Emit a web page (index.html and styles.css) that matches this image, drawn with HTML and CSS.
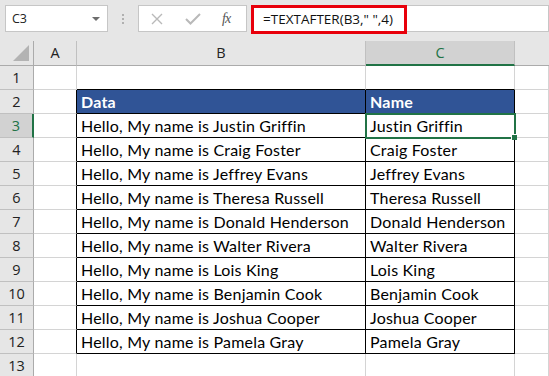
FILE: index.html
```html
<!DOCTYPE html>
<html lang="en">
<head>
  <meta charset="UTF-8" />
  <title>TEXTAFTER</title>
  <link rel="stylesheet" href="styles.css">
</head>
<body>
  <div class="formula-bar">
    <div class="name-box">
      <span>C3</span>
      <span class="drop"></span>
    </div>
    <div class="grip">
      <i></i><i></i><i></i>
    </div>
    <div class="fx-buttons">
      <svg class="btn-x" width="12" height="12" viewBox="0 0 12 12"><path d="M1 1 L11 11 M11 1 L1 11" stroke="#b9b9b9" stroke-width="1.4" fill="none"/></svg>
      <svg class="btn-ok" width="16" height="12" viewBox="0 0 16 12"><path d="M1 6 L5.5 10.5 L15 1" stroke="#b9b9b9" stroke-width="2" fill="none"/></svg>
      <span class="fx">fx</span>
    </div>
    <div class="formula-input">
      <span class="formula">=TEXTAFTER(B3," ",4)</span>
    </div>
  </div>

  <div class="sheet" id="sheet"></div>

  <script>
    const rows = [
      ['Hello, My name is Justin Griffin', 'Justin Griffin'],
      ['Hello, My name is Craig Foster', 'Craig Foster'],
      ['Hello, My name is Jeffrey Evans', 'Jeffrey Evans'],
      ['Hello, My name is Theresa Russell', 'Theresa Russell'],
      ['Hello, My name is Donald Henderson', 'Donald Henderson'],
      ['Hello, My name is Walter Rivera', 'Walter Rivera'],
      ['Hello, My name is Lois King', 'Lois King'],
      ['Hello, My name is Benjamin Cook', 'Benjamin Cook'],
      ['Hello, My name is Joshua Cooper', 'Joshua Cooper'],
      ['Hello, My name is Pamela Gray', 'Pamela Gray']
    ];
    const sheet = document.getElementById('sheet');

    function cell(cls, text) {
      const d = document.createElement('div');
      d.className = 'cell ' + cls;
      if (text) d.textContent = text;
      sheet.appendChild(d);
      return d;
    }

    // column headers
    cell('corner');
    cell('col-head', 'A');
    cell('col-head', 'B');
    cell('col-head sel', 'C');
    cell('col-head last', '');

    for (let r = 1; r <= 13; r++) {
      cell('row-head' + (r === 3 ? ' sel' : ''), String(r));
      const inTable = r >= 2 && r <= 12;
      cell(inTable ? 'a edge' : 'a');
      if (r === 1) {
        cell('b top');
        cell('c top');
      } else if (r === 2) {
        cell('b head', 'Data');
        cell('c head', 'Name');
      } else if (inTable) {
        cell('b data', rows[r - 3][0]);
        cell('c data' + (r === 3 ? ' active' : ''), rows[r - 3][1]);
      } else {
        cell('b');
        cell('c');
      }
      cell('d' + (inTable ? ' edge' : ''));
    }
  </script>
</body>
</html>
```

FILE: styles.css
```css
body {
  margin: 0;
  background-color: #e6e6e6;
  font-family: "Open Sans", sans-serif;
  overflow: hidden;
}
.formula-bar {
  display: flex;
  align-items: flex-start;
  height: 41px;
  padding: 5px 0 0 5px;
  box-sizing: border-box;
}
.name-box {
  width: 103px;
  height: 27px;
  box-sizing: border-box;
  background-color: #fff;
  border: 1px solid #c6c6c6;
  display: flex;
  align-items: center;
  justify-content: space-between;
  padding: 0 7px 0 6px;
  font-size: 12.5px;
  color: #222;
}
.drop {
  width: 0;
  height: 0;
  border-left: 4px solid transparent;
  border-right: 4px solid transparent;
  border-top: 4px solid #6d6d6d;
}
.grip {
  width: 30px;
  height: 27px;
  display: flex;
  flex-direction: column;
  align-items: center;
  justify-content: center;
  gap: 2px;
}
.grip i {
  width: 2px;
  height: 2px;
  background-color: #b0b0b0;
}
.fx-buttons {
  width: 109px;
  height: 27px;
  box-sizing: border-box;
  background-color: #fff;
  border: 1px solid #c6c6c6;
  display: flex;
  align-items: center;
  padding: 0 0 0 12px;
}
.btn-x {
  margin-right: 22px;
}
.btn-ok {
  margin-right: 21px;
}
.fx {
  font-family: "Liberation Serif", serif;
  font-style: italic;
  font-size: 14px;
  color: #555;
  letter-spacing: -1px;
}
.formula-input {
  margin-left: 4px;
  width: 298px;
  height: 27px;
  box-sizing: border-box;
  background-color: #fff;
  border: 1px solid #c6c6c6;
  position: relative;
}
.formula {
  position: absolute;
  left: -1px;
  top: -1px;
  width: 156px;
  height: 29px;
  box-sizing: border-box;
  border: 3px solid #e8000b;
  font-size: 13.5px;
  line-height: 22px;
  padding-left: 9px;
  color: #111;
}
.sheet {
  display: grid;
  grid-template-columns: 34px 43px 289px 149px 1fr;
  grid-template-rows: 25px repeat(13, 24px);
  background-color: #fff;
}
.cell {
  box-sizing: border-box;
  border-right: 1px solid #d4d4d4;
  border-bottom: 1px solid #d4d4d4;
  font-family: "Lato", sans-serif;
  font-size: 16px;
  letter-spacing: 0.2px;
  line-height: 24px;
  padding-left: 4px;
  white-space: nowrap;
  color: #000;
}
.corner,
.col-head,
.row-head {
  background-color: #e6e6e6;
  border-color: #ababab;
  font-family: "Open Sans", sans-serif;
  font-size: 14.5px;
  letter-spacing: 0;
  text-align: center;
  padding: 0;
  color: #222;
}
.col-head {
  border-right-color: #c0c0c0;
  line-height: 24px;
}
.col-head.last {
  border-right: 0;
}
.row-head {
  border-right-color: #ababab;
  border-bottom-color: #c0c0c0;
  line-height: 23px;
}
.corner {
  position: relative;
}
.corner::after {
  content: "";
  position: absolute;
  right: 4px;
  bottom: 4px;
  border-left: 16px solid transparent;
  border-bottom: 16px solid #b3b3b3;
}
.col-head.sel,
.row-head.sel {
  background-color: #d2d2d2;
  color: #217346;
}
.col-head.sel {
  border-bottom: 2px solid #217346;
}
.row-head.sel {
  border-right: 2px solid #217346;
}
.a.edge {
  border-right-color: #000;
}
.top {
  border-bottom-color: #000;
}
.data,
.head {
  border-right-color: #000;
  border-bottom-color: #000;
}
.head {
  background-color: #305496;
  color: #fff;
  font-weight: bold;
}
.active {
  position: relative;
  outline: 2px solid #217346;
  outline-offset: -1px;
}
.active::after {
  content: "";
  position: absolute;
  right: -3px;
  bottom: -3px;
  width: 5px;
  height: 5px;
  background-color: #217346;
  border: 1px solid #fff;
  border-width: 1px 0 0 1px;
}
```
